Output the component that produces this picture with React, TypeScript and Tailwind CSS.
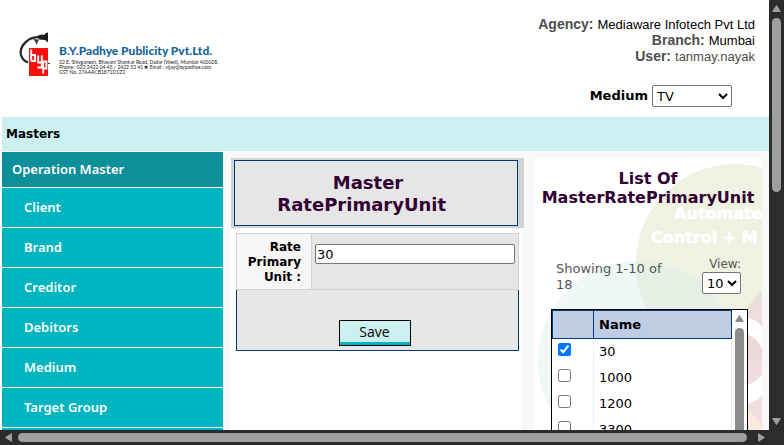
import React, { useState } from "react";

const menu = ["Client", "Brand", "Creditor", "Debitors", "Medium", "Target Group"];
const rows = ["30", "1000", "1200", "3300"];

function Logo() {
  return (
    <div className="flex items-start gap-2">
      <svg className="h-12 w-8 shrink-0" viewBox="19 30 32 48" aria-hidden="true">
        <rect x="29" y="48" width="19" height="28" fill="#f5100c" />
        <path d="M43 37.5C37 36.5 31 37.5 27 41C22 45 20 50 21 55C22 59 24 61 28 62.5" fill="none" stroke="#2a2a2a" strokeWidth="2.3" />
        <path d="M38 35.5L42 34.5L44 35L46 33L48 32.5V42.5L45 40L39 39.5Z" fill="#1c1c1c" />
        <path d="M33 39L39 39.5L38 41.5L36.5 45L35.2 41.5Z" fill="#3a3a3a" />
        <path d="M31.2 49.5V61.5M31.2 55H35V61H31.2M38.2 55.5V62.5H41.8M41.8 55.5V67.5H37.5M43.2 61V73.5M43.2 61.5H46.4V68.5H43.2" fill="none" stroke="#fff" strokeWidth="1.9" />
        <path d="M48 63.5H50" stroke="#333" strokeWidth="1.2" />
      </svg>
      <div className="pt-3.5 font-['Lato',sans-serif] text-[5px]/[5px] whitespace-nowrap text-[#222]">
        <p className="mb-0.5 text-[12px]/[14px] font-black text-[#14649a]">
          B.Y.Padhye Publicity Pvt.Ltd.
        </p>
        <p>32 E, Shivganesh, Bhavani Shankar Road, Dadar (West), Mumbai 400028.</p>
        <p>Phone : 022 2422 04 45 / 2422 52 41 ✱ Email : vijay@bypadhye.com</p>
        <p>GST No. 27AAACB1871D1Z2</p>
      </div>
    </div>
  );
}

function Backdrop() {
  return (
    <svg
      className="absolute top-0 left-0 h-[272px] w-[228px]"
      viewBox="534 158 228 272"
      aria-hidden="true"
    >
      <defs>
        <clipPath id="teal"><circle cx="638" cy="361" r="100" /></clipPath>
      </defs>
      <circle cx="638" cy="361" r="100" fill="#eff7f7" />
      <circle cx="735" cy="263" r="99" fill="#eff2e1" />
      <circle cx="735" cy="263" r="99" fill="#e6efe4" clipPath="url(#teal)" />
      <path d="M762 291C753 299 748 306 744 315V430H762Z" fill="#f0dfe0" />
      <path d="M762 291C753 299 748 306 744 315V322C751 318 757 319 762 324Z" fill="#ecdedb" />
      <path d="M740 318C750 317 757 320 762 327V395C757 401 750 404 740 405Z" fill="#fff" />
      <path d="M740 331C752 335 759 341 762 350V374C759 380 752 384 740 387Z" fill="#f0dcde" />
      <path d="M740 331C752 335 759 341 762 350V356C756 360 749 361 740 360Z" fill="#ead9d8" />
      <path d="M744 405L762 401V430H744Z" fill="#f0dfe1" />
      <path d="M744 405C750 412 758 419 762 426V430H744Z" fill="#fbeadd" />
      <g fill="#fff" stroke="#fff" strokeWidth="0.6" fontFamily="DejaVu Sans, sans-serif" fontWeight="700" fontSize="16">
        <text x="674" y="219">Automate</text>
        <text x="651" y="243">Control + M</text>
      </g>
    </svg>
  );
}

function Header() {
  return (
    <header className="flex h-[117px] justify-between">
      <div className="pt-[30px] pl-[17px]">
        <Logo />
      </div>
      <div className="pt-4">
        <div className="pr-3.5 font-['Liberation_Sans',sans-serif] text-[13px]/4 text-[#4d4d4d]">
          <p className="flex h-4 items-baseline justify-end gap-1"><b className="text-sm/4">Agency:</b> <span className="text-black">Mediaware Infotech Pvt Ltd</span></p>
          <p className="flex h-4 items-baseline justify-end gap-1"><b className="text-sm/4">Branch:</b> <span className="text-black">Mumbai</span></p>
          <p className="flex h-4 items-baseline justify-end gap-1"><b className="text-sm/4">User:</b> <span>tanmay.nayak</span></p>
        </div>
        <div className="mt-[21px] flex items-center justify-end gap-1 pr-[37px]">
          <label htmlFor="medium" className="font-bold">Medium</label>
          <select id="medium" className="h-[22px] w-20 rounded-xs border border-[#767676] bg-white">
            <option>TV</option>
            <option>Radio</option>
          </select>
        </div>
      </div>
    </header>
  );
}

function Sidebar() {
  return (
    <nav className="w-[221px] shrink-0 border-t border-white bg-[#00b4c0] font-['Noto_Sans',sans-serif] font-semibold text-white">
      <p className="flex h-9 items-center border-b border-white bg-[#0e8f99] px-2.5">Operation Master</p>
      {menu.map((m) => (
        <a key={m} href="#" className="flex h-10 items-center border-b border-white px-[22px]">{m}</a>
      ))}
    </nav>
  );
}

function EditForm() {
  const [value, setValue] = useState("30");
  return (
    <form className="ml-2 min-w-0 flex-1" onSubmit={(e) => e.preventDefault()}>
      <div className="mt-[7px] bg-[#d2d2d2] py-0.5 pr-1.5 pl-[3px]">
        <h1 className="flex h-[66px] items-center justify-center border border-[#003c7a] bg-[#e6e6e6] pt-0.5 pr-4 text-center text-lg/[22px] font-bold text-[#330033]">
          <span>Master<br />RatePrimaryUnit&nbsp;&nbsp;</span>
        </h1>
      </div>
      <div className="mr-[3px] h-full bg-white pt-[5px] pr-0.5 pl-[5px]">
        <div className="flex h-[57px] border border-[#d2d2d2] bg-[#e6e6e6]">
          <label htmlFor="rate" className="flex w-[75px] shrink-0 items-center border-r border-[#d2d2d2] bg-[#f6f6f6] pt-0.5 pr-2.5 pl-2 text-right text-[12px]/[15px] font-bold">
            Rate Primary Unit :
          </label>
          <div className="min-w-0 flex-1 px-[3px] pt-2.5">
            <input
              id="rate"
              value={value}
              onChange={(e) => setValue(e.target.value)}
              className="block h-5 w-full rounded-xs border border-[#767676] bg-white px-px"
            />
          </div>
        </div>
        <div className="flex h-[61px] items-end justify-center border border-t-0 border-[#003c7a] bg-[#e6e6e6] pr-1.5 pb-1">
          <button type="submit" className="h-[26px] w-[72px] border border-black bg-[#cceff1] font-['Open_Sans',sans-serif] text-sm/[21px]">
            <span className="block h-6 border-b-3 border-[#00b4c0]">Save</span>
          </button>
        </div>
      </div>
    </form>
  );
}

function ListPanel() {
  const [checked, setChecked] = useState(["30"]);
  const toggle = (r: string) =>
    setChecked((c) => (c.includes(r) ? c.filter((x) => x !== r) : [...c, r]));
  return (
    <section className="relative mt-[7px] mr-[7px] ml-2.5 w-[228px] shrink-0 overflow-hidden bg-white">
      <Backdrop />
      <div className="relative">
        <h2 className="pt-[11px] text-center text-base/[19px] font-bold text-[#330033]">List Of MasterRatePrimaryUnit</h2>
        <div className="mt-[49px] flex h-[53px] justify-between pr-[21px] pl-[22px] text-[#555]">
          <p className="w-28 pt-[5px] leading-4">Showing 1-10 of 18</p>
          <div className="flex flex-col items-end">
            <label htmlFor="view" className="text-[12px]/4">View:</label>
            <select id="view" className="h-[22px] w-[39px] rounded-xs border border-[#767676] bg-white text-black">
              <option>10</option>
              <option>20</option>
            </select>
          </div>
        </div>
        <div className="mr-3.5 ml-[17px] flex border border-black bg-white">
          <table className="flex-1 border-collapse text-left">
            <thead>
              <tr className="h-7 bg-[#bfcde4]">
                <th className="w-[41px] border border-[#003c7a]" aria-label="Select" />
                <th className="border border-[#003c7a] px-[5px] font-bold">Name</th>
              </tr>
            </thead>
            <tbody>
              {rows.map((r) => (
                <tr key={r} className="h-[26px]">
                  <td className="border-r border-[#eee] pl-[5px] align-top">
                    <input
                      type="checkbox"
                      aria-label={r}
                      checked={checked.includes(r)}
                      onChange={() => toggle(r)}
                      className="mt-1 block size-[13px]"
                    />
                  </td>
                  <td className="border-r border-[#eee] px-[5px]">{r}</td>
                </tr>
              ))}
            </tbody>
          </table>
          <div className="flex w-[15px] flex-col items-center bg-[#fcfcfc] pt-1">
            <Arrow className="size-[9px] text-[#8b8b8b]" />
            <div className="mt-[5px] w-[9px] flex-1 rounded-t-full bg-[#8b8b8b]" />
          </div>
        </div>
      </div>
    </section>
  );
}

function Arrow({ className }: { className: string }) {
  return (
    <svg className={`shrink-0 ${className}`} viewBox="0 0 9 9" aria-hidden="true">
      <path d="M4.5 1.5L8.3 7.5H0.7Z" fill="currentColor" stroke="currentColor" strokeLinejoin="round" />
    </svg>
  );
}

export default function App() {
  return (
    <div className="flex h-screen flex-col overflow-hidden bg-white font-['DejaVu_Sans',sans-serif] text-[13px] text-black">
      <div className="flex min-h-0 flex-1">
        <main className="flex min-w-0 flex-1 flex-col overflow-hidden pl-0.5">
          <Header />
          <div className="flex h-[34px] shrink-0 items-center bg-[#cceff1] px-1 text-[12px] font-bold">Masters</div>
          <div className="flex min-h-0 flex-1 overflow-hidden bg-[#f8f8f8]">
            <Sidebar />
            <EditForm />
            <ListPanel />
          </div>
        </main>
        <div className="flex w-[15px] flex-col items-center justify-between bg-[#2c2c2c] py-1 text-[#9f9f9f]">
          <Arrow className="size-[9px]" />
          <div className="mt-[5px] mb-auto h-[174px] w-[9px] rounded-full bg-[#9f9f9f]" />
          <Arrow className="size-[9px] rotate-180" />
        </div>
      </div>
      <div className="flex h-[15px] items-center bg-[#2c2c2c] pr-[18px] pl-1 text-[#9f9f9f]">
        <Arrow className="size-[9px] -rotate-90" />
        <div className="mr-2.5 ml-[5px] h-[9px] flex-1 rounded-full bg-[#9f9f9f]" />
        <Arrow className="size-[9px] rotate-90" />
      </div>
    </div>
  );
}
